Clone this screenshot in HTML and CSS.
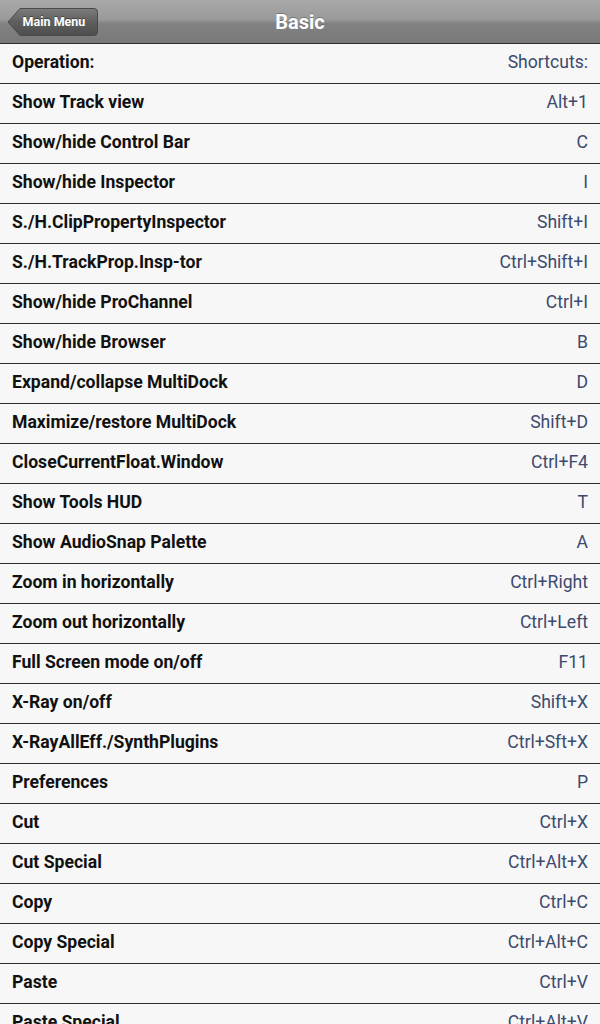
FILE: index.html
```html
<!DOCTYPE html>
<html>
<head>
<meta charset="utf-8">
<link rel="stylesheet" href="styles.css">
</head>
<body>
<div class="header">
  <div class="back"><svg class="back-shape" width="92" height="30" viewBox="0 0 92 30"><defs><linearGradient id="bg" x1="0" y1="0" x2="0" y2="1"><stop offset="0" stop-color="#7c7c7c"/><stop offset="0.5" stop-color="#5e5e5e"/><stop offset="1" stop-color="#4e4e4e"/></linearGradient></defs><path d="M1 15 L13 1.5 H87 Q90.5 1.5 90.5 5 V25 Q90.5 28.5 87 28.5 H13 Z" fill="url(#bg)" stroke="#4a4a4a" stroke-width="1"/></svg><span class="back-label">Main Menu</span></div>
  <div class="title">Basic</div>
</div>
<div class="list">
  <div class="row"><span class="op">Operation:</span><span class="sc">Shortcuts:</span></div>
  <div class="row"><span class="op">Show Track view</span><span class="sc">Alt+1</span></div>
  <div class="row"><span class="op">Show/hide Control Bar</span><span class="sc">C</span></div>
  <div class="row"><span class="op">Show/hide Inspector</span><span class="sc">I</span></div>
  <div class="row"><span class="op">S./H.ClipPropertyInspector</span><span class="sc">Shift+I</span></div>
  <div class="row"><span class="op">S./H.TrackProp.Insp-tor</span><span class="sc">Ctrl+Shift+I</span></div>
  <div class="row"><span class="op">Show/hide ProChannel</span><span class="sc">Ctrl+I</span></div>
  <div class="row"><span class="op">Show/hide Browser</span><span class="sc">B</span></div>
  <div class="row"><span class="op">Expand/collapse MultiDock</span><span class="sc">D</span></div>
  <div class="row"><span class="op">Maximize/restore MultiDock</span><span class="sc">Shift+D</span></div>
  <div class="row"><span class="op">CloseCurrentFloat.Window</span><span class="sc">Ctrl+F4</span></div>
  <div class="row"><span class="op">Show Tools HUD</span><span class="sc">T</span></div>
  <div class="row"><span class="op">Show AudioSnap Palette</span><span class="sc">A</span></div>
  <div class="row"><span class="op">Zoom in horizontally</span><span class="sc">Ctrl+Right</span></div>
  <div class="row"><span class="op">Zoom out horizontally</span><span class="sc">Ctrl+Left</span></div>
  <div class="row"><span class="op">Full Screen mode on/off</span><span class="sc">F11</span></div>
  <div class="row"><span class="op">X-Ray on/off</span><span class="sc">Shift+X</span></div>
  <div class="row"><span class="op">X-RayAllEff./SynthPlugins</span><span class="sc">Ctrl+Sft+X</span></div>
  <div class="row"><span class="op">Preferences</span><span class="sc">P</span></div>
  <div class="row"><span class="op">Cut</span><span class="sc">Ctrl+X</span></div>
  <div class="row"><span class="op">Cut Special</span><span class="sc">Ctrl+Alt+X</span></div>
  <div class="row"><span class="op">Copy</span><span class="sc">Ctrl+C</span></div>
  <div class="row"><span class="op">Copy Special</span><span class="sc">Ctrl+Alt+C</span></div>
  <div class="row"><span class="op">Paste</span><span class="sc">Ctrl+V</span></div>
  <div class="row"><span class="op">Paste Special</span><span class="sc">Ctrl+Alt+V</span></div>
</div>
</body>
</html>
```
FILE: styles.css
```css
html, body {
  margin: 0;
  padding: 0;
  background: #f7f7f7;
  font-family: Roboto, "Liberation Sans", sans-serif;
  overflow: hidden;
}
.header {
  position: relative;
  height: 43px;
  border-bottom: 1px solid #2e2e2e;
  background: linear-gradient(#a9a9a9 0%, #9a9a9a 45%, #828282 55%, #787878 100%);
  display: flex;
  align-items: center;
  justify-content: center;
}
.title {
  color: #fff;
  font-weight: bold;
  font-size: 20px;
  text-shadow: 0 -1px 0 rgba(0,0,0,0.25);
  margin-top: 1px;
}
.back {
  position: absolute;
  left: 7px;
  top: 7px;
  width: 92px;
  height: 30px;
}
.back-shape {
  position: absolute;
  left: 0;
  top: 0;
}
.back-label {
  position: absolute;
  left: 12px;
  top: 0;
  right: 10px;
  height: 30px;
  line-height: 30px;
  text-align: center;
  color: #fff;
  font-size: 12.5px;
  font-weight: bold;
  text-shadow: 0 -1px 0 rgba(0,0,0,0.4);
}
.row {
  height: 39px;
  border-bottom: 1px solid #2e2e2e;
  display: flex;
  align-items: center;
  justify-content: space-between;
  padding: 0 12px 4px;
  box-sizing: border-box;
  height: 40px;
  background: #f7f7f7;
}
.op {
  font-weight: bold;
  font-size: 17.6px;
  color: #111;
}
.sc {
  font-size: 17.6px;
  color: #3c4a6e;
}
```
